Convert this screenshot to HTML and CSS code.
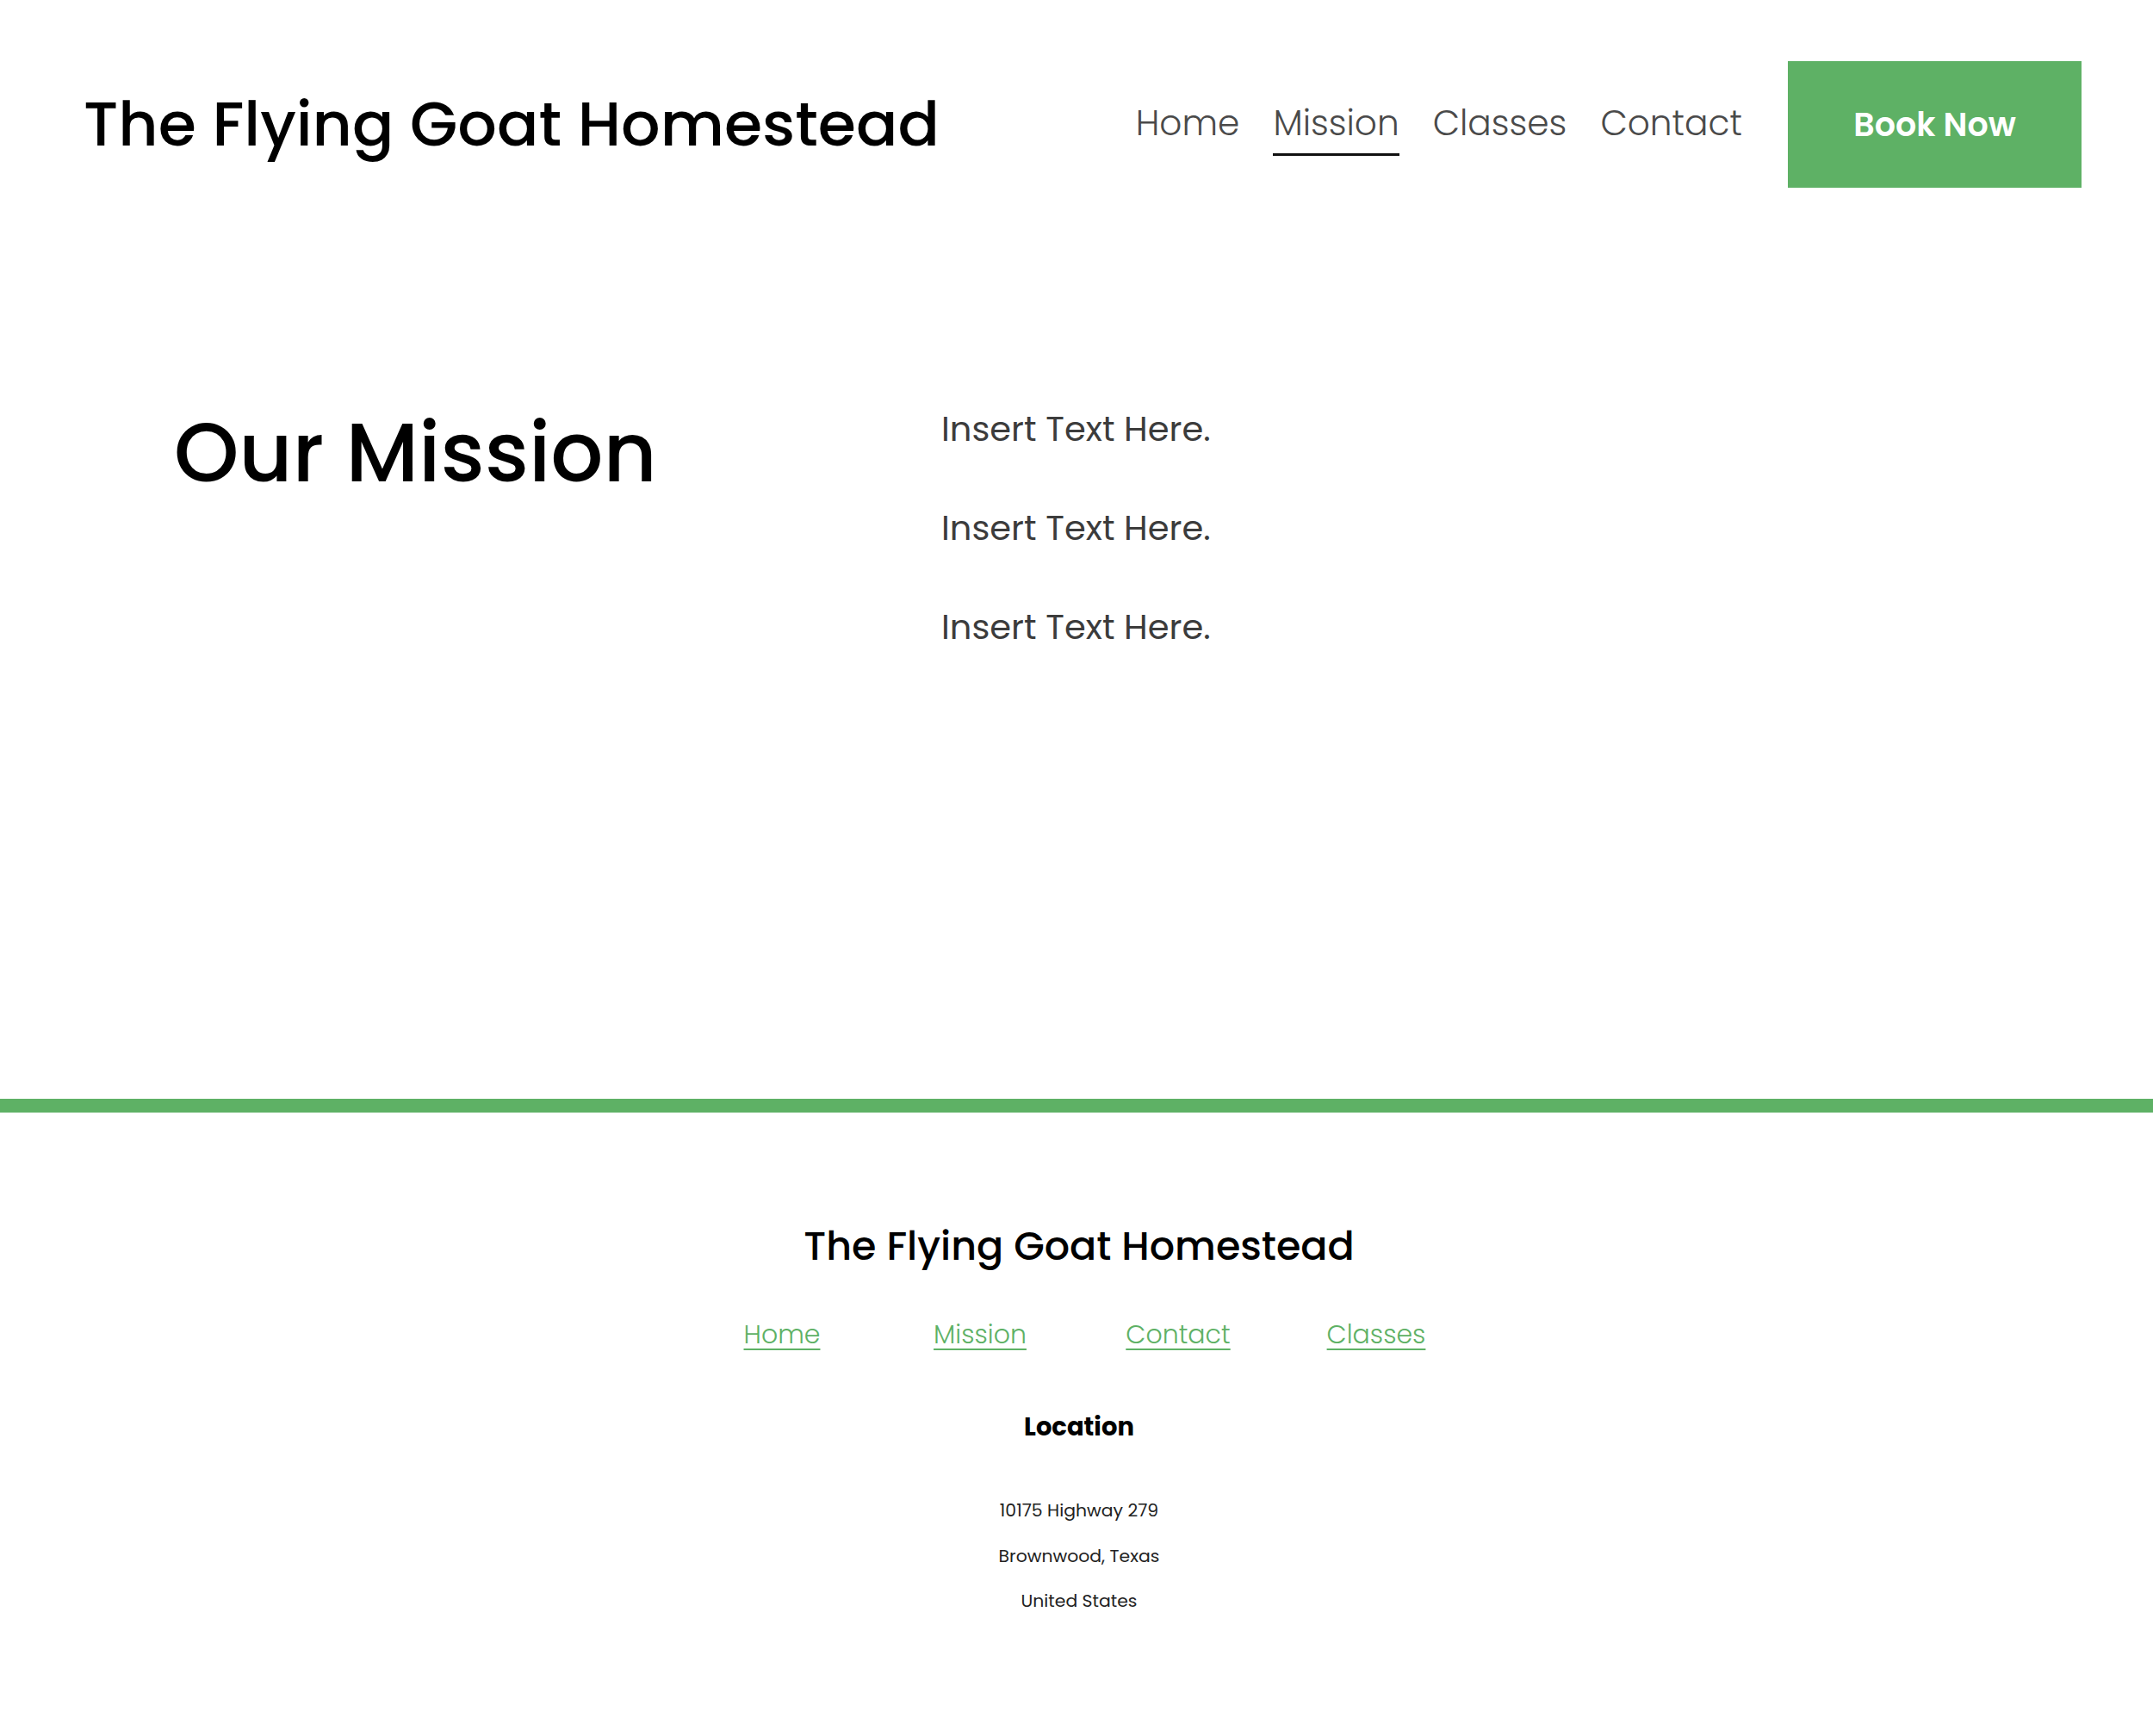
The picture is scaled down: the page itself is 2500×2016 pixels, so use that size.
FILE: index.html
```html
<!DOCTYPE html>
<html lang="en">
<head>
<meta charset="utf-8">
<title>Our Mission — The Flying Goat Homestead</title>
<link rel="stylesheet" href="styles.css">
</head>
<body>
<header class="site-header">
  <a class="site-title" href="#">The Flying Goat Homestead</a>
  <nav class="main-nav">
    <a class="nav-link" href="#">Home</a>
    <a class="nav-link active" href="#">Mission</a>
    <a class="nav-link" href="#">Classes</a>
    <a class="nav-link" href="#">Contact</a>
  </nav>
  <a class="book-btn" href="#">Book Now</a>
</header>

<main class="mission">
  <h1 class="mission-title">Our Mission</h1>
  <div class="mission-text">
    <p>Insert Text Here.</p>
    <p>Insert Text Here.</p>
    <p>Insert Text Here.</p>
  </div>
</main>

<footer class="site-footer">
  <h2 class="footer-title">The Flying Goat Homestead</h2>
  <nav class="footer-nav">
    <a href="#">Home</a>
    <a href="#">Mission</a>
    <a href="#">Contact</a>
    <a href="#">Classes</a>
  </nav>
  <h3 class="footer-heading">Location</h3>
  <address class="footer-address">
    <span>10175 Highway 279</span>
    <span>Brownwood, Texas</span>
    <span>United States</span>
  </address>
</footer>
</body>
</html>
```
FILE: styles.css
```css
* { box-sizing: border-box; }

html, body {
  margin: 0;
  padding: 0;
  background: #ffffff;
}

body {
  font-family: "Poppins", "Inter", "Open Sans", sans-serif;
  color: #000;
}

a { text-decoration: none; color: inherit; }

/* Header */
.site-header {
  display: flex;
  align-items: center;
  padding: 71px 83px 0 97px;
}

.site-title {
  font-size: 71.5px;
  font-weight: 500;
  line-height: 1;
  color: #000;
}

.main-nav {
  margin-left: auto;
  display: flex;
  gap: 39px;
  align-items: center;
}

.nav-link {
  display: block;
  font-size: 40.7px;
  font-weight: 300;
  line-height: 1;
  color: #4a4a4a;
  padding-top: 15px;
  padding-bottom: 14px;
  border-bottom: 3px solid transparent;
}

.nav-link.active {
  border-bottom-color: #111;
}

.book-btn {
  margin-left: 53px;
  width: 341px;
  height: 147px;
  background: #5eb165;
  color: #fff;
  font-size: 38px;
  font-weight: 600;
  display: flex;
  align-items: center;
  justify-content: center;
}

/* Mission */
.mission {
  display: grid;
  grid-template-columns: 891px 1fr;
  align-items: start;
  padding: 260px 0 528px 202px;
}

.mission-title {
  margin: 0;
  font-size: 96px;
  font-weight: 500;
  line-height: 1;
  color: #000;
}

.mission-text {
  display: flex;
  flex-direction: column;
  gap: 75px;
}

.mission-text p {
  margin: 0;
  font-size: 40px;
  font-weight: 400;
  line-height: 1;
  color: #3c3c3c;
}

/* Footer */
.site-footer {
  border-top: 16px solid #5eb165;
  padding: 132px 0 0 6px;
  text-align: center;
}

.footer-title {
  margin: 0;
  font-size: 46px;
  font-weight: 500;
  line-height: 1;
  color: #000;
}

.footer-nav {
  margin: 65px auto 0;
  display: grid;
  grid-template-columns: repeat(4, 230px);
  justify-content: center;
}

.footer-nav a {
  font-size: 30px;
  font-weight: 300;
  line-height: 1;
  color: #5eb165;
  text-decoration: underline;
  text-decoration-thickness: 2px;
  text-underline-offset: 6px;
  justify-self: center;
}

.footer-heading {
  margin: 78px 0 0;
  font-size: 29px;
  font-weight: 700;
  line-height: 1;
}

.footer-address {
  margin-top: 56px;
  font-style: normal;
  display: flex;
  flex-direction: column;
  font-size: 20.4px;
  line-height: 52.5px;
  font-weight: 400;
  color: #222;
}
```
